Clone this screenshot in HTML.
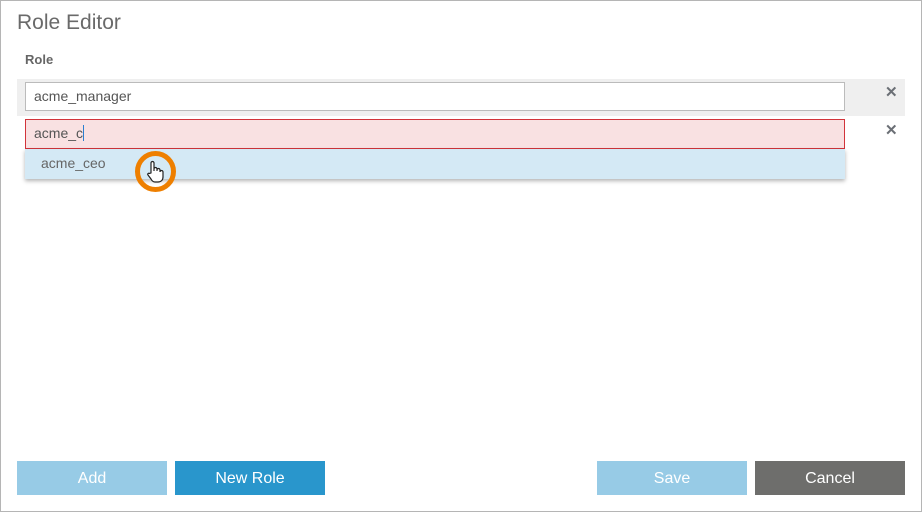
<!DOCTYPE html>
<html><head><style>
body{margin:0;width:922px;height:512px;overflow:hidden;font-family:"Liberation Sans",sans-serif;background:#fff}
.frame{position:absolute;left:0;top:0;width:920px;height:510px;border:1px solid #b5b5b5}
.abs{position:absolute}
.btn{position:absolute;top:461px;height:34px;width:150px;color:#fff;font-size:16px;text-align:center;line-height:35px}
.x{position:absolute;font-size:15px;font-weight:bold;color:#6b6f75}
</style></head><body>
<div class="frame"></div>
<div class="abs" style="left:17px;top:11px;font-size:21px;color:#6a6a6a">Role Editor</div>
<div class="abs" style="left:25px;top:52px;font-size:13px;font-weight:bold;color:#666">Role</div>
<div class="abs" style="left:17px;top:79px;width:888px;height:37px;background:#efefef"></div>
<div class="abs" style="left:25px;top:82px;width:818px;height:27px;background:#fff;border:1px solid #bbb"></div>
<div class="abs" style="left:34px;top:88px;font-size:14px;color:#555">acme_manager</div>
<div class="x" style="left:885px;top:83px">✕</div>
<div class="abs" style="left:25px;top:119px;width:818px;height:28px;background:#f9e1e2;border:1px solid #d2343a"></div>
<div class="abs" style="left:34px;top:125px;font-size:14px;color:#555">acme_c<span style="display:inline-block;width:1px;height:16px;background:#2a7fd0;vertical-align:-3px"></span></div>
<div class="x" style="left:885px;top:121px">✕</div>
<div class="abs" style="left:25px;top:149px;width:820px;height:30px;background:#d4e9f5;box-shadow:0 2px 4px rgba(0,0,0,.3)"></div>
<div class="abs" style="left:41px;top:155px;font-size:14px;color:#666">acme_ceo</div>
<div class="abs" style="left:135px;top:151px;width:41px;height:41px;border:5px solid #ee7f00;border-radius:50%;box-sizing:border-box"></div>
<svg class="abs" style="left:146px;top:160px" width="20" height="24" viewBox="0 0 20 24"><path d="M5 13V3a1.5 1.5 0 0 1 3 0v8V9a1.5 1.5 0 0 1 3 0v2V10a1.5 1.5 0 0 1 3 0v2a1.5 1.5 0 0 1 3 0v5c0 3-2 5-5 5H9c-2 0-3-1-4-3l-3-4c-.8-1 .5-2.3 1.5-1.5z" fill="#fff" stroke="#222" stroke-width="1.2"/></svg>
<div class="btn" style="left:17px;background:#97cbe6">Add</div>
<div class="btn" style="left:175px;background:#2996cc">New Role</div>
<div class="btn" style="left:597px;background:#97cbe6">Save</div>
<div class="btn" style="left:755px;background:#6e6e6c">Cancel</div>
</body></html>
